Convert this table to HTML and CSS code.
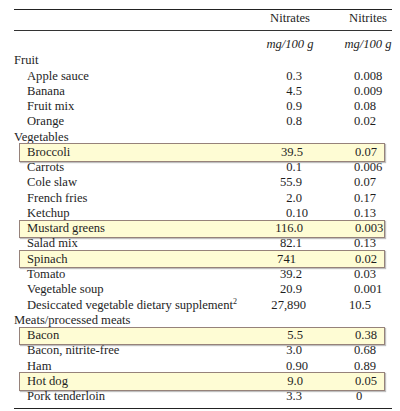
FILE: index.html
```html
<!DOCTYPE html>
<html lang="en">
<head>
    <meta charset="UTF-8">
    <title>Nitrates and nitrites in foods</title>
    <link rel="stylesheet" href="styles.css">
</head>
<body>
    <div class="table">
        <div class="head">
            <div></div>
            <div class="h">Nitrates</div>
            <div class="h">Nitrites</div>
        </div>
        <div class="units">
            <div></div>
            <div class="h"><i>mg/100 g</i></div>
            <div class="h"><i>mg/100 g</i></div>
        </div>

        <div class="group">Fruit</div>
        <div class="row"><span>Apple sauce</span><span class="no">0.3</span><span class="ni">0.008</span></div>
        <div class="row"><span>Banana</span><span class="no">4.5</span><span class="ni">0.009</span></div>
        <div class="row"><span>Fruit mix</span><span class="no">0.9</span><span class="ni">0.08</span></div>
        <div class="row"><span>Orange</span><span class="no">0.8</span><span class="ni">0.02</span></div>

        <div class="group">Vegetables</div>
        <div class="row hl"><span>Broccoli</span><span class="no">39.5</span><span class="ni">0.07</span></div>
        <div class="row"><span>Carrots</span><span class="no">0.1</span><span class="ni">0.006</span></div>
        <div class="row"><span>Cole slaw</span><span class="no">55.9</span><span class="ni">0.07</span></div>
        <div class="row"><span>French fries</span><span class="no">2.0</span><span class="ni">0.17</span></div>
        <div class="row"><span>Ketchup</span><span class="no"><span class="x2">0.10</span></span><span class="ni">0.13</span></div>
        <div class="row hl"><span>Mustard greens</span><span class="no">116.0</span><span class="ni">0.003</span></div>
        <div class="row"><span>Salad mix</span><span class="no">82.1</span><span class="ni">0.13</span></div>
        <div class="row hl"><span>Spinach</span><span class="no"><span class="int">741</span></span><span class="ni">0.02</span></div>
        <div class="row"><span>Tomato</span><span class="no">39.2</span><span class="ni">0.03</span></div>
        <div class="row"><span>Vegetable soup</span><span class="no">20.9</span><span class="ni">0.001</span></div>
        <div class="row"><span>Desiccated vegetable dietary supplement<sup>2</sup></span><span class="no"><span class="big">27,890</span></span><span class="ni"><span class="ten">10.5</span></span></div>

        <div class="group">Meats/processed meats</div>
        <div class="row hl"><span>Bacon</span><span class="no">5.5</span><span class="ni">0.38</span></div>
        <div class="row"><span>Bacon, nitrite-free</span><span class="no">3.0</span><span class="ni">0.68</span></div>
        <div class="row"><span>Ham</span><span class="no"><span class="x2">0.90</span></span><span class="ni">0.89</span></div>
        <div class="row hl"><span>Hot dog</span><span class="no">9.0</span><span class="ni">0.05</span></div>
        <div class="row"><span>Pork tenderloin</span><span class="no">3.3</span><span class="ni"><span class="zero">0</span></span></div>
    </div>
</body>
</html>
```

FILE: styles.css
```css
body {
    margin: 0;
    background: #fff;
    font-family: "Liberation Serif", "Times New Roman", serif;
    font-size: 12.6px;
    color: #1e1e1e;
}
.table {
    width: 378px;
    margin: 9px 0 0 14px;
    border-top: 1.5px solid #222;
    border-bottom: 1.5px solid #222;
    padding-bottom: 4px;
    white-space: nowrap;
}
.head, .units {
    display: grid;
    grid-template-columns: 246px 60px 1fr;
}
.head {
    line-height: 16px;
    padding: 0 0 4px;
    border-bottom: 1px solid #333;
}
.units {
    line-height: 15.27px;
    padding-top: 6px;
    margin-bottom: 1px;
}
.h {
    text-align: center;
}
.head .h:last-child, .units .h:last-child {
    padding-left: 24px;
}
.group {
    line-height: 15.27px;
    height: 15.27px;
}
.row {
    display: grid;
    grid-template-columns: 233px 42px 1fr;
    padding-left: 13px;
    line-height: 15.27px;
    height: 15.27px;
}
.row.hl {
    grid-template-columns: 240px 42px 1fr;
    margin: -1.5px 7px -1.5px 5px;
    padding: 0.5px 0 0.5px 1px;
    border: 1px solid #96827a;
    background: #fefcd4;
    box-shadow: 1px 1px 1px rgba(0, 0, 0, 0.25);
    position: relative;
}
.row.hl > span:first-child {
    padding-left: 6px;
}
.no {
    text-align: right;
}
.ni {
    padding-left: 52px;
}
.x2 {
    margin-right: -6px;
}
.int {
    padding-right: 7px;
}
.big {
    margin-right: -4px;
}
.ten {
    margin-left: -5px;
}
.zero {
    margin-left: 2px;
}
sup {
    font-size: 8px;
    line-height: 0;
    vertical-align: 5px;
}
```
